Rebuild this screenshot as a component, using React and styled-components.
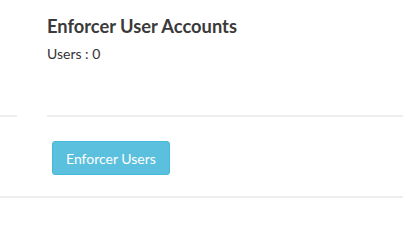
import React from 'react';
import styled, { createGlobalStyle } from 'styled-components';

const Global = createGlobalStyle`
  body {
    margin: 0;
    background: #ffffff;
    font-family: Lato, "Liberation Sans", sans-serif;
    color: #333333;
  }
`;

const Page = styled.div`
  width: 403px;
  height: 209px;
  overflow: hidden;
`;

const Header = styled.div`
  padding: 14px 0 0 47px;
  height: 115px;
  box-sizing: border-box;
`;

const Title = styled.h3`
  margin: 0;
  font-size: 18.3px;
  font-weight: 700;
  line-height: 24px;
  color: #3a3a3a;
`;

const Count = styled.div`
  margin-top: 7px;
  font-size: 14px;
  line-height: 18px;
  color: #333333;
`;

const Divider = styled.div`
  display: flex;
  gap: 30px;
  height: 2px;
`;

const Segment = styled.div`
  flex: ${p => (p.$grow ? 1 : `0 0 ${p.$width}px`)};
  border-top: 2px solid #eeeeee;
`;

const Body = styled.div`
  padding: 24px 0 21px 52px;
  border-bottom: 2px solid #eeeeee;
`;

const Button = styled.button`
  height: 34px;
  padding: 0 13px;
  border: 1px solid #46b8da;
  border-radius: 3px;
  background: #5bc0de;
  color: #ffffff;
  font-family: Lato, "Liberation Sans", sans-serif;
  font-size: 14px;
  cursor: pointer;
`;

export default function App() {
  return (
    <Page>
      <Global />
      <Header>
        <Title>Enforcer User Accounts</Title>
        <Count>Users : 0</Count>
      </Header>
      <Divider>
        <Segment $width={17} />
        <Segment $grow />
      </Divider>
      <Body>
        <Button>Enforcer Users</Button>
      </Body>
    </Page>
  );
}
